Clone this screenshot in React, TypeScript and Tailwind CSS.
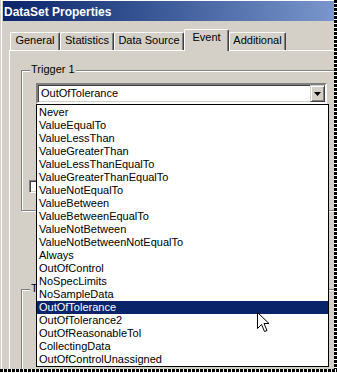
import React from "react"

const tabs = [
  { label: "General", w: "w-[50px]" },
  { label: "Statistics", w: "w-[54px]" },
  { label: "Data Source", w: "w-[70px]" },
  { label: "Event", w: "w-[45px]", active: true },
  { label: "Additional", w: "w-[57px]" },
]

const options = [
  "Never",
  "ValueEqualTo",
  "ValueLessThan",
  "ValueGreaterThan",
  "ValueLessThanEqualTo",
  "ValueGreaterThanEqualTo",
  "ValueNotEqualTo",
  "ValueBetween",
  "ValueBetweenEqualTo",
  "ValueNotBetween",
  "ValueNotBetweenNotEqualTo",
  "Always",
  "OutOfControl",
  "NoSpecLimits",
  "NoSampleData",
  "OutOfTolerance",
  "OutOfTolerance2",
  "OutOfReasonableTol",
  "CollectingData",
  "OutOfControlUnassigned",
]

function Tab({ label, w, active }: { label: string; w: string; active?: boolean }) {
  if (active) {
    return (
      <div className={`${w} h-[22px] -mb-px relative z-10 bg-[#d4d0c8] border-t border-l border-white border-r border-r-[#404040] shadow-[inset_-1px_0_0_#808080] rounded-t-[2px] pt-px text-center`}>
        {label}
      </div>
    )
  }
  return (
    <div className={`${w} h-[18px] bg-[#d4d0c8] border-t border-l border-white border-r border-r-[#404040] shadow-[inset_-1px_0_0_#808080] rounded-t-[2px] pt-px text-center`}>
      {label}
    </div>
  )
}

export default function App() {
  const selected = "OutOfTolerance"

  return (
    <div className="w-[337px] h-[373px] bg-white relative font-['Liberation_Sans',Arial,sans-serif] text-[11px] leading-[13px] text-black">
      <div className="flex">
        <div className="w-[334px] h-[369px] bg-[#d4d0c8] overflow-hidden">
          <div className="ml-px h-full flex flex-col border-t border-l border-white">
            {/* title bar */}
            <div className="ml-px h-[20px] shrink-0 flex items-center pt-[2px] pl-px bg-linear-to-r from-[#0a246a] to-[#7a96cc] text-white font-bold text-[12px] leading-[14px]">
              DataSet Properties
            </div>

            {/* tabs */}
            <div className="mt-[8px] h-[21px] shrink-0 flex items-end pl-[8px]">
              {tabs.map((t) => (
                <Tab key={t.label} {...t} />
              ))}
            </div>

            {/* tab page */}
            <div className="ml-[7px] flex-1 flex flex-col border-t border-l border-white">
              <div className="relative ml-[11px] mt-[19px] w-[330px] h-[141px] shrink-0 border border-[#808080] shadow-[inset_1px_1px_0_#fff,1px_1px_0_#fff]">
                <span className="absolute left-[8px] top-[-8px] px-px bg-[#d4d0c8]">Trigger 1</span>

                {/* combo */}
                <div className="relative ml-[14px] mt-[12px] w-[291px] h-[21px] z-20">
                  <div className="h-full flex items-center bg-white border-2 border-t-[#808080] border-l-[#808080] border-b-white border-r-white shadow-[inset_1px_1px_0_#404040,inset_-1px_-1px_0_#d4d0c8] pl-[3px]">
                    <span className="flex-1">{selected}</span>
                    <div className="w-[15px] h-[17px] flex items-center justify-center bg-[#d4d0c8] border border-t-[#d4d0c8] border-l-[#d4d0c8] border-r-[#404040] border-b-[#404040] shadow-[inset_1px_1px_0_#fff,inset_-1px_-1px_0_#808080]">
                      <svg width="7" height="4" viewBox="0 0 7 4">
                        <polygon points="0,0 7,0 3.5,4" fill="#000" />
                      </svg>
                    </div>
                  </div>

                  {/* dropped list */}
                  <div className="absolute left-0 top-[21px] w-[293px] bg-white border border-black pt-px">
                    {options.map((o) => (
                      <div
                        key={o}
                        className={`h-[13px] pl-[2px] whitespace-nowrap ${o === selected ? "bg-[#0a246a] text-white" : ""}`}
                      >
                        {o}
                      </div>
                    ))}
                  </div>
                </div>

                <div className="ml-[7px] mt-[76px] w-[13px] h-[13px] bg-white border border-t-[#808080] border-l-[#808080] border-b-white border-r-white shadow-[inset_1px_1px_0_#404040,inset_-1px_-1px_0_#d4d0c8]" />
              </div>

              <div className="relative ml-[11px] mt-[78px] w-[330px] h-[200px] shrink-0 border border-[#808080] shadow-[inset_1px_1px_0_#fff,1px_1px_0_#fff]">
                <span className="absolute left-[8px] top-[-8px] px-px bg-[#d4d0c8]">T</span>
              </div>
            </div>
          </div>
        </div>
        {/* torn right edge */}
        <div className="w-[3px] h-[369px] bg-[repeating-linear-gradient(to_bottom,#000_0_3px,#fff_3px_4px)]" />
      </div>
      {/* torn bottom edge */}
      <div className="w-[337px] h-[3px] bg-[repeating-linear-gradient(to_right,#000_0_3px,#fff_3px_4px)]" />

      {/* mouse pointer */}
      <svg className="absolute left-[257px] top-[312px] z-30" width="13" height="21" viewBox="0 0 13 21">
        <path d="M0.5 0.5 L0.5 16.5 L4.5 12.5 L7.5 19.5 L10 18.5 L7 11.5 L12 11.5 Z" fill="#fff" stroke="#000" strokeWidth="1" />
      </svg>
    </div>
  )
}
